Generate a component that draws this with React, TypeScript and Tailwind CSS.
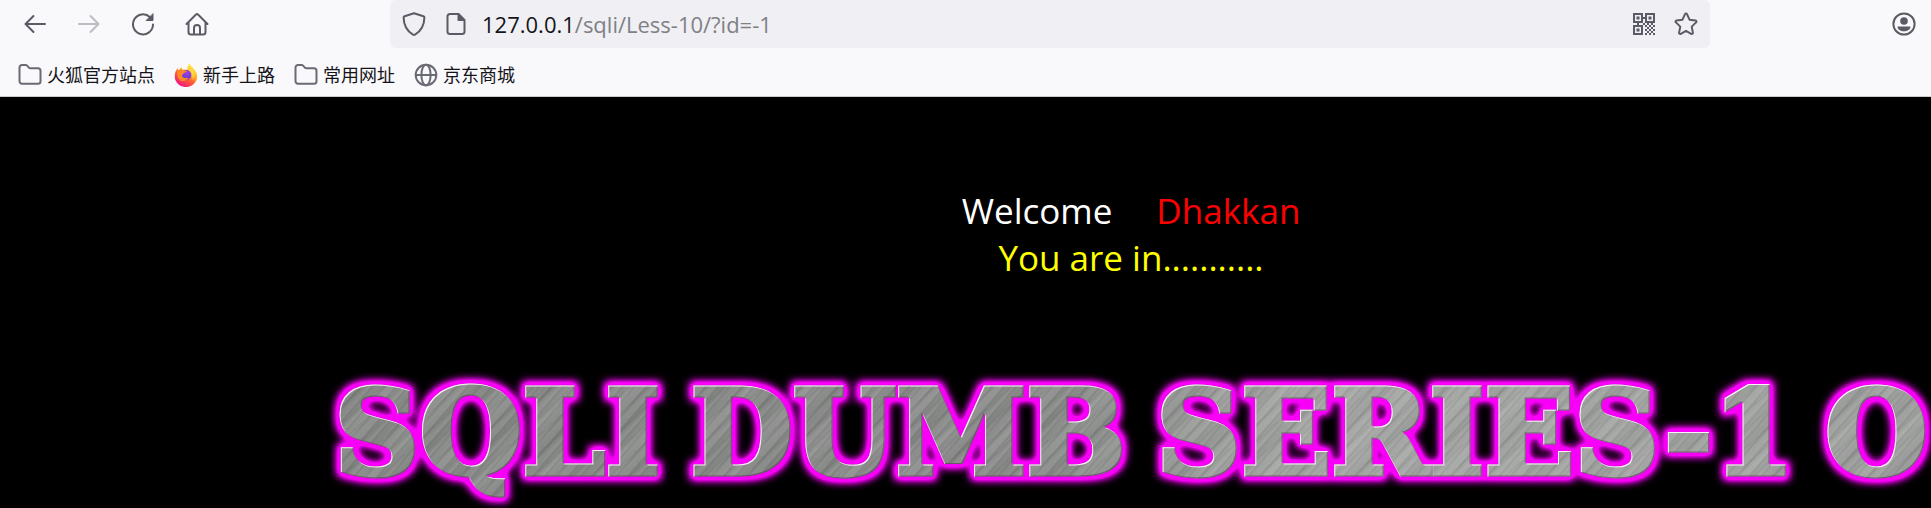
import type { ReactNode } from "react";

const strokeProps = {
  fill: "none",
  stroke: "currentColor",
  strokeWidth: 2,
  strokeLinecap: "round" as const,
  strokeLinejoin: "round" as const,
};

function Icon({ children }: { children: ReactNode }) {
  return (
    <svg viewBox="0 0 24 24" className="size-6 shrink-0" aria-hidden="true" {...strokeProps}>
      {children}
    </svg>
  );
}

function FolderIcon() {
  return (
    <Icon>
      <path d="M1.5 4.5a2.5 2.5 0 0 1 2.5-2.5h3.6c.6 0 1.1.2 1.5.6l2 2.2c.3.3.7.5 1.1.5h7.8a2.5 2.5 0 0 1 2.5 2.5v10.4a2.5 2.5 0 0 1-2.5 2.5H4a2.5 2.5 0 0 1-2.5-2.5z" />
    </Icon>
  );
}

function GlobeIcon() {
  return (
    <Icon>
      <circle cx="12" cy="12" r="10.3" />
      <ellipse cx="12" cy="12" rx="4.6" ry="10.3" />
      <path d="M2 12h20" />
    </Icon>
  );
}

function FirefoxIcon() {
  return (
    <svg viewBox="0 0 24 24" className="size-6 shrink-0" aria-hidden="true">
      <defs>
        <linearGradient id="ffBody" x1="0.85" y1="0.1" x2="0.3" y2="1">
          <stop offset="0" stopColor="#fff44f" />
          <stop offset="0.35" stopColor="#ffb02e" />
          <stop offset="0.62" stopColor="#ff5a36" />
          <stop offset="1" stopColor="#f0118a" />
        </linearGradient>
        <radialGradient id="ffCore" cx="0.6" cy="0.3" r="0.8">
          <stop offset="0" stopColor="#a03cf0" />
          <stop offset="1" stopColor="#4c3fd0" />
        </radialGradient>
      </defs>
      <path
        d="M15.6.4c.6 2 2.4 3.2 4 5.1 2.4 2.5 3.6 5 3.6 8.1A11.2 10.6 0 0 1 .8 13.4C.8 9.8 2 7 3.6 5c.1 1 .2 1.7.7 2.3C5.5 6.5 6.3 5 7.6 4.2c0 1.2.4 2 1.4 2.5 1.5-.2 3-.2 4.2.2C13.2 4.5 13.9 2 15.6.4z"
        fill="url(#ffBody)"
      />
      <circle cx="12.2" cy="12" r="5" fill="url(#ffCore)" />
      <path
        d="M3.6 8.2c2.8-1.7 6.8-1.3 9.4.4-1 .9-2.4 1-3.2 1.6-.9.7-.9 1.7-1.9 2.2.5 2.7 4 3.3 6.6 2-1.2 2.7-5 4.5-8.2 3C3.8 15.8 2.6 11.6 3.6 8.2z"
        fill="#ff8a24"
      />
      <path d="M14.5 6.8c3 1.6 5.2 5 3.6 9.4 2.2-1.7 3-5 1.800-7.700-.6-1.500-2-3.300-3.600-4.700-.6.800-1.400 1.900-1.800 3z" fill="#ffd83a" />
    </svg>
  );
}

function QrIcon() {
  const dots = [
    [10, 10], [14, 10], [18, 10], [12, 12], [16, 12], [20, 12], [14, 14], [18, 14],
    [12, 16], [16, 16], [20, 16], [14, 18], [18, 18], [12, 20], [16, 20], [20, 20],
  ];
  return (
    <svg viewBox="0 0 22 22" className="size-[22px]" aria-hidden="true" fill="currentColor">
      <path fillRule="evenodd" d="M0 0h10v10H0zM2 2v6h6V2zM12 0h10v10H12zM14 2v6h6V2zM0 12h10v10H0zM2 14v6h6v-6z" />
      <path d="M3.500 3.500h3v3h-3zM15.500 3.500h3v3h-3zM3.500 15.500h3v3h-3zM10 4h2v2h-2zM4 10h2v2H4z" />
      {dots.map(([x, y]) => (
        <rect key={`${x}-${y}`} x={x} y={y} width="2" height="2" />
      ))}
    </svg>
  );
}

function ToolButton({ label, disabled, children }: { label: string; disabled?: boolean; children: ReactNode }) {
  return (
    <button type="button" aria-label={label} disabled={disabled} className="flex size-6 items-center justify-center text-[#5b5b66] disabled:text-[#bcbcc2]">
      {children}
    </button>
  );
}

function Bookmark({ icon, label }: { icon: ReactNode; label: string }) {
  return (
    <a href="#" className="flex items-center gap-[5px]">
      <span className="text-[#6a6a74]">{icon}</span>
      {label}
    </a>
  );
}

function MetalFilter() {
  return (
    <svg className="absolute size-0" aria-hidden="true">
      <filter id="neon" x="-5%" y="-30%" width="110%" height="160%" colorInterpolationFilters="sRGB">
        <feMorphology in="SourceAlpha" operator="dilate" radius="3" result="wide" />
        <feGaussianBlur in="wide" stdDeviation="4" result="soft" />
        <feComponentTransfer in="soft" result="halo">
          <feFuncA type="linear" slope="2" />
        </feComponentTransfer>
        <feFlood floodColor="#f800f8" />
        <feComposite in2="halo" operator="in" result="glow" />
        <feOffset in="SourceAlpha" dx="1" dy="1" result="lower" />
        <feFlood floodColor="#fbf0fb" />
        <feComposite in2="SourceAlpha" operator="in" result="white" />
        <feComposite in="white" in2="lower" operator="out" result="light" />
        <feOffset in="SourceAlpha" dx="-1" dy="-1" result="upper" />
        <feFlood floodColor="#5c405c" floodOpacity="0.7" />
        <feComposite in2="SourceAlpha" operator="in" result="dim" />
        <feComposite in="dim" in2="upper" operator="out" result="shade" />
        <feMerge>
          <feMergeNode in="glow" />
          <feMergeNode in="SourceGraphic" />
          <feMergeNode in="shade" />
          <feMergeNode in="light" />
        </feMerge>
      </filter>
    </svg>
  );
}

export default function App() {
  return (
    <div className="flex min-h-screen flex-col overflow-hidden bg-black font-['Open_Sans','Noto_Sans_CJK_SC',sans-serif]">
      <header className="border-b border-[#ccccd0] bg-[#f9f9fb] text-[#15141a]">
        <div className="flex h-12 items-center pr-[15px] pl-[23px]">
          <nav aria-label="Navigation" className="flex w-[367px] shrink-0 gap-[30px]">
            <ToolButton label="Back">
              <Icon><path d="M22 12H2.500M10.500 4l-8 8 8 8" /></Icon>
            </ToolButton>
            <ToolButton label="Forward" disabled>
              <Icon><path d="M2 12h19.500M13.500 4l8 8-8 8" /></Icon>
            </ToolButton>
            <ToolButton label="Reload">
              <Icon>
                <path d="M22 12.500A10 10 0 1 1 19 5.200" />
                <path d="M22 2v6.500h-6.500z" fill="currentColor" strokeWidth="1" />
              </Icon>
            </ToolButton>
            <ToolButton label="Home">
              <Icon>
                <path d="M1.500 12 11 2.500c.6-.6 1.400-.6 2 0L22.500 12M3.500 10.500V20a2.500 2.500 0 0 0 2.500 2.500h12a2.500 2.500 0 0 0 2.500-2.500v-9.500" />
                <path d="M9 22v-6a3 3 0 0 1 6 0v6" />
              </Icon>
            </ToolButton>
          </nav>
          <div className="flex h-12 min-w-0 flex-1 items-center rounded-md bg-[#f0f0f4] px-3 text-[#5b5b66]">
            <Icon>
              <path d="M12 1.300 2.600 4.200c-.7.200-1 .7-1 1.400C1.800 13 4 18.500 11 22.700c.7.400 1.300.4 2 0 7-4.200 9.200-9.700 9.400-17.100 0-.7-.3-1.200-1-1.400z" />
            </Icon>
            <svg viewBox="0 0 24 24" className="ml-[18px] size-6 shrink-0" aria-hidden="true" {...strokeProps}>
              <path d="M6 2h8.500L20.500 8v11.500a2.500 2.500 0 0 1-2.500 2.500H6a2.500 2.500 0 0 1-2.500-2.500v-15A2.500 2.500 0 0 1 6 2z" />
              <path d="M14.500 2.500V8h5.500z" fill="currentColor" />
            </svg>
            <div className="ml-[14px] flex-1 text-[22px] leading-8 whitespace-nowrap text-[#808086]">
              <span className="text-[#15141a]">127.0.0.1</span>/sqli/Less-10/?id=-1
            </div>
            <button type="button" aria-label="QR code"><QrIcon /></button>
            <button type="button" aria-label="Bookmark this page" className="ml-[19px]">
              <Icon>
                <path d="M11 2.200c.4-.9 1.600-.9 2 0l2.500 5.500 6 .7c1 .1 1.400 1.300.6 2l-4.400 4.200 1.200 6c.2 1-.8 1.700-1.700 1.200L12 18.900l-5.200 2.900c-.9.500-1.900-.2-1.700-1.200l1.200-6-4.400-4.200c-.8-.7-.4-1.900.6-2l6-.7z" />
              </Icon>
            </button>
          </div>
          <div className="ml-[182px]">
            <ToolButton label="Account">
              <Icon>
                <circle cx="12" cy="12" r="10.6" />
                <circle cx="12" cy="9" r="3.8" fill="currentColor" stroke="none" />
                <path d="M5.500 14.500h13c0 3-3 4.800-6.500 4.800s-6.500-1.800-6.500-4.800z" fill="currentColor" stroke="none" />
              </Icon>
            </ToolButton>
          </div>
        </div>
        <nav aria-label="Bookmarks" className="flex h-12 items-center gap-[19px] pt-[6px] pl-[18px] text-[18px] text-[#15141a]">
          <Bookmark icon={<FolderIcon />} label="火狐官方站点" />
          <Bookmark icon={<FirefoxIcon />} label="新手上路" />
          <Bookmark icon={<FolderIcon />} label="常用网址" />
          <Bookmark icon={<GlobeIcon />} label="京东商城" />
        </nav>
      </header>
      <main className="flex flex-col items-center pt-[90px] pl-[331px]">
        <p className="flex gap-[44px] text-[35px] leading-[47px] text-white">
          <span>Welcome</span>
          <span className="text-[#ff0000]">Dhakkan</span>
        </p>
        <p className="text-[35px] leading-[47px] text-[#ffff00]">You are in...........</p>
        <MetalFilter />
        <div className="mt-[82px] [filter:url(#neon)]">
          <h1 className="flex gap-[30px] bg-[repeating-linear-gradient(131deg,#ffffff1c_0px,#ffffff00_1px,#00000012_3px,#ffffff00_4px,#ffffff08_9px),repeating-linear-gradient(137deg,#00000010_0px,#00000000_2px,#ffffff12_5px,#00000000_13px),repeating-linear-gradient(134deg,#0000000c_0px,#ffffff10_19px,#0000000c_43px),linear-gradient(90deg,#868886,#888a88_45%,#a4a6a4_62%,#9c9e9c)] bg-clip-text px-1 font-['DejaVu_Serif',serif] text-[118px] leading-[140px] font-bold whitespace-nowrap text-transparent [-webkit-text-stroke:5px_transparent]">
            <span>SQLI</span>
            <span>DUMB</span>
            <span>SERIES-1</span>
            <span>O</span>
          </h1>
        </div>
      </main>
    </div>
  );
}
